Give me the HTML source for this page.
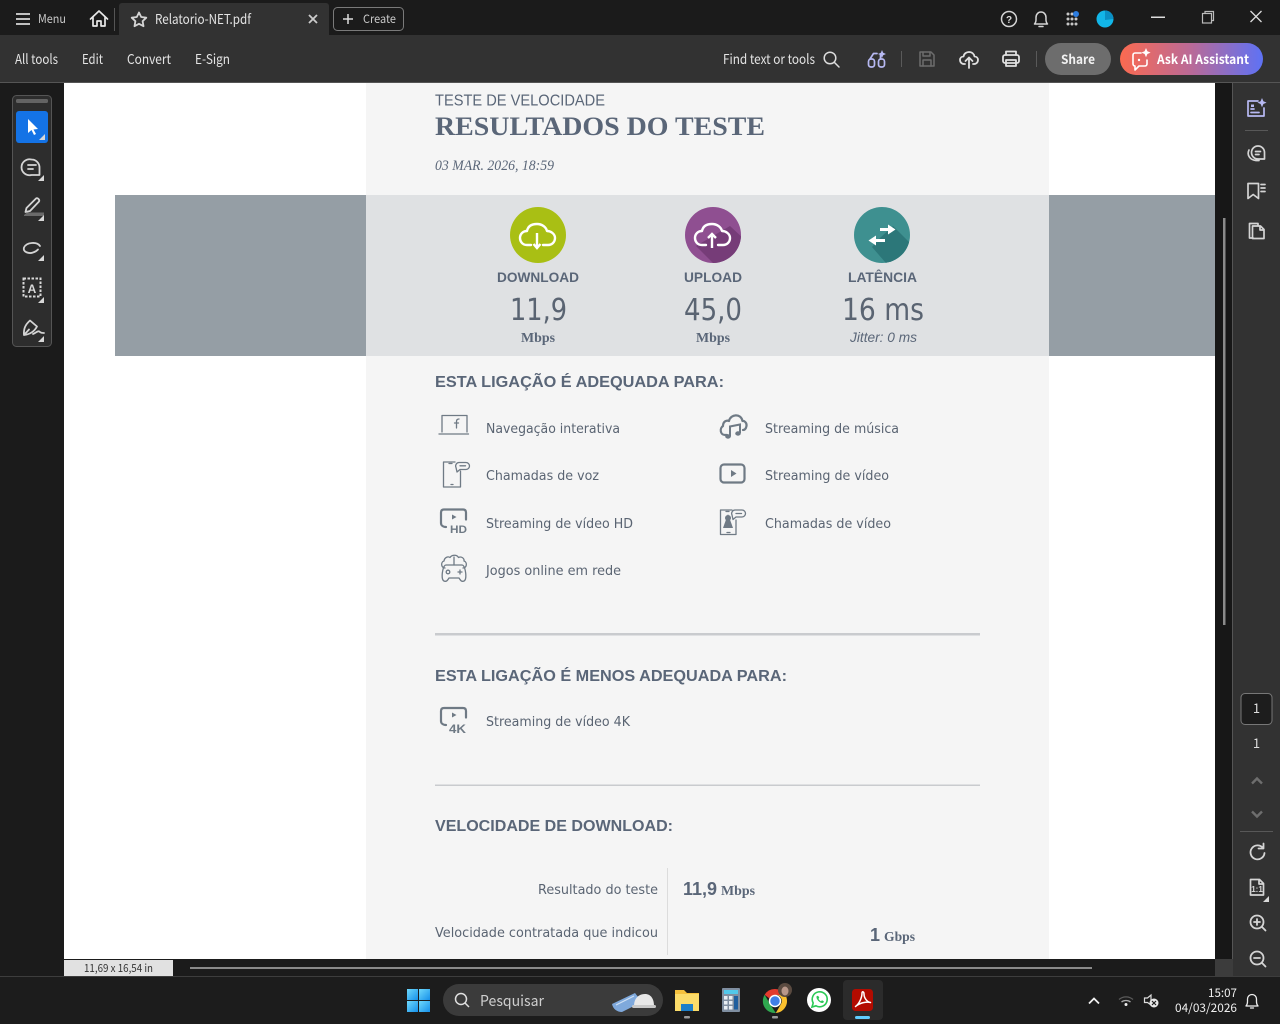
<!DOCTYPE html>
<html lang="pt"><head><meta charset="utf-8"><title>Relatorio-NET.pdf</title>
<style>
html,body{margin:0;padding:0;background:#1b1b1b;overflow:hidden}
svg{display:block}
.ui{font-family:"Noto Sans CJK JP","Liberation Sans",sans-serif;fill:#e4e4e4}
.os{font-family:"DejaVu Sans","Liberation Sans",sans-serif;fill:#5a6472;font-size:13.5px}
.ar{font-family:"Liberation Sans",sans-serif;fill:#5a6678}
.se{font-family:"Liberation Serif",serif;fill:#5a6678}
.b{font-weight:bold}
.ic{fill:none;stroke:#d4d4d4;stroke-width:1.5;stroke-linecap:round;stroke-linejoin:round}
.dc{fill:none;stroke:#6f7a85;stroke-width:1.300;stroke-linecap:round;stroke-linejoin:round}
.dt{fill:none;stroke:#6f7a85;stroke-width:2.200;stroke-linecap:round;stroke-linejoin:round}
</style></head><body>
<svg width="1280" height="1024" viewBox="0 0 1280 1024" xmlns="http://www.w3.org/2000/svg">
<defs>
<linearGradient id="ai" x1="0" x2="1" y1="0" y2="0"><stop offset="0" stop-color="#fb6a50"/><stop offset=".5" stop-color="#b96a98"/><stop offset="1" stop-color="#5e72f5"/></linearGradient>
<linearGradient id="win" x1="0" x2="1" y1="0" y2="1"><stop offset="0" stop-color="#6fd8fb"/><stop offset="1" stop-color="#1590ea"/></linearGradient>
<clipPath id="c1"><circle cx="713" cy="235" r="28"/></clipPath>
<clipPath id="c2"><circle cx="882" cy="235" r="28"/></clipPath>
<path id="cloud" d="M531 245H527C522 245 520 241 520 238C520 234 523 231 527 231C528 226 532 224 537 224C542 224 546 227 547 231C551 231 555 234 555 238C555 242 552 245 548 245H543" fill="none" stroke="#fff" stroke-width="2.400" stroke-linecap="round" stroke-linejoin="round"/>
<path id="tri" d="M6 0V6H0Z" fill="#d8d8d8"/>
</defs>

<!-- base -->
<rect width="1280" height="1024" fill="#1b1b1b"/>
<rect x="0" y="35" width="1280" height="47" fill="#323232"/>
<rect x="0" y="82" width="1280" height="1" fill="#555"/>
<path d="M119 35V6a3 3 0 0 1 3-3H326a3 3 0 0 1 3 3V35Z" fill="#323232"/>
<rect x="114" y="8" width="1" height="23" fill="#555"/>

<!-- top-left -->
<path d="M16 14H30M16 19H30M16 24H30" stroke="#d8d8d8" stroke-width="1.700" fill="none"/>
<text class="ui" x="38" y="23" font-size="12" textLength="28" lengthAdjust="spacingAndGlyphs" style="fill:#c8c8c8">Menu</text>
<path class="ic" style="stroke:#e8e8e8;stroke-width:1.700" d="M90.500 19L99 11L107.500 19M93 17.500V26H97V21H101V26H105V17.500"/>
<path class="ic" style="stroke-width:1.800" d="M139 12.500L141.200 17L146.300 17.700L142.600 21.200L143.500 26.200L139 23.800L134.500 26.200L135.400 21.200L131.700 17.700L136.800 17Z"/>
<text class="ui" x="155" y="24" font-size="13.500" textLength="96" lengthAdjust="spacingAndGlyphs">Relatorio-NET.pdf</text>
<path d="M309 15L317 23M317 15L309 23" stroke="#ccc" stroke-width="1.800"/>
<rect x="333.500" y="7.500" width="70" height="23" rx="4" fill="none" stroke="#7a7a7a"/>
<path d="M348 14V24M343 19H353" stroke="#ddd" stroke-width="1.500"/>
<text class="ui" x="363" y="23" font-size="11.500" textLength="33" lengthAdjust="spacingAndGlyphs" style="fill:#c8c8c8">Create</text>

<!-- top-right -->
<circle cx="1009" cy="19" r="7.500" class="ic"/>
<text x="1009" y="23" text-anchor="middle" font-family="Liberation Sans,sans-serif" font-size="10" font-weight="bold" fill="#ddd">?</text>
<path class="ic" d="M1034.500 24C1036.500 22 1036 20 1036 17.500C1036 14 1038.500 12 1041 12C1043.500 12 1046 14 1046 17.500C1046 20 1045.500 22 1047.500 24ZM1039 26.500H1043"/>
<g fill="#c8c8c8"><circle cx="1068" cy="14" r="1.500"/><circle cx="1072" cy="14" r="1.500"/><circle cx="1068" cy="19" r="1.500"/><circle cx="1072" cy="19" r="1.500"/><circle cx="1076" cy="19" r="1.500"/><circle cx="1068" cy="24" r="1.500"/><circle cx="1072" cy="24" r="1.500"/><circle cx="1076" cy="24" r="1.500"/></g>
<circle cx="1076" cy="14" r="3" fill="#2d7de0"/>
<circle cx="1105" cy="19" r="8.500" fill="#12b6e8"/>
<path d="M1105 10.500A8.500 8.500 0 0 1 1113.500 19L1105 20Z" fill="#0a8fc4"/>
<rect x="1151" y="16.500" width="14" height="1.500" fill="#ddd"/>
<rect x="1202.500" y="13.500" width="9" height="9.500" fill="none" stroke="#bbb" stroke-width="1.200"/>
<path d="M1205 13.500V11.500H1213.500V20.500H1211.500" fill="none" stroke="#bbb" stroke-width="1.200"/>
<path d="M1250.500 11L1261.500 22M1261.500 11L1250.500 22" stroke="#ddd" stroke-width="1.300"/>

<!-- toolbar -->
<g class="ui" font-size="13.500">
<text x="15" y="64" textLength="43" lengthAdjust="spacingAndGlyphs">All tools</text>
<text x="82" y="64" textLength="21" lengthAdjust="spacingAndGlyphs">Edit</text>
<text x="127" y="64" textLength="44" lengthAdjust="spacingAndGlyphs">Convert</text>
<text x="195" y="64" textLength="35" lengthAdjust="spacingAndGlyphs">E-Sign</text>
<text x="723" y="64" textLength="92" lengthAdjust="spacingAndGlyphs">Find text or tools</text>
</g>
<circle cx="830" cy="58" r="5.800" class="ic" style="stroke:#ddd"/><path d="M834.500 62.500L839 67" class="ic" style="stroke:#ddd"/>
<g class="ic" style="stroke:#b7b9f2;stroke-width:1.700"><rect x="868.500" y="59" width="6" height="8" rx="2.500"/><rect x="878.500" y="59" width="6" height="8" rx="2.500"/><path d="M870 59L873.500 53.500H877M880.500 59V55"/></g>
<path d="M882 50l1.200 2.800 2.800 1.200-2.800 1.200-1.200 2.800-1.200-2.800-2.800-1.200 2.800-1.200z" fill="#b7b9f2"/>
<rect x="901" y="51" width="1" height="16" fill="#5a5a5a"/>
<g class="ic" style="stroke:#6d6d6d"><path d="M920 52H931L934 55V66H920Z"/><path d="M923 52V56H930V52M923 66V60H931V66"/></g>
<g class="ic" style="stroke:#e0e0e0;stroke-width:1.800"><path d="M965 64H964C961.500 64 960 62 960 60C960 58 961.500 56.500 963.500 56.500C964 53.500 966.500 52 969 52C972 52 974 54 974.500 56.500C976.500 56.500 978 58 978 60C978 62 976.500 64 974 64H973"/><path d="M969 68V58M965.500 61L969 57.500L972.500 61"/></g>
<g class="ic" style="stroke:#e0e0e0;stroke-width:1.800"><path d="M1006 55V51.500H1016V55"/><rect x="1003" y="55" width="16" height="8" rx="2"/><rect x="1006" y="60" width="10" height="6"/></g>
<rect x="1036" y="51" width="1" height="16" fill="#5a5a5a"/>
<rect x="1045" y="43" width="66" height="32" rx="16" fill="#6d6d6d"/>
<text class="ui b" x="1061" y="64" font-size="13" textLength="34" lengthAdjust="spacingAndGlyphs" style="fill:#f2f2f2">Share</text>
<rect x="1120" y="43" width="143" height="32" rx="16" fill="url(#ai)"/>
<path class="ic" style="stroke:#fff;stroke-width:1.600" d="M1141 53H1135a2 2 0 0 0-2 2V64a2 2 0 0 0 2 2V70L1139 66H1145a2 2 0 0 0 2-2V60"/>
<path d="M1146 48l1.400 3.200 3.200 1.400-3.200 1.400-1.400 3.200-1.400-3.200-3.200-1.400 3.200-1.400z" fill="#fff"/>
<circle cx="1139" cy="60" r="1.200" fill="#fff"/>
<text class="ui b" x="1157" y="64" font-size="13" textLength="92" lengthAdjust="spacingAndGlyphs" style="fill:#fff">Ask AI Assistant</text>

<!-- page -->
<rect x="64" y="83" width="1151" height="876" fill="#fff"/>
<rect x="366" y="83" width="683" height="876" fill="#f5f5f5"/>
<rect x="115" y="195" width="1100" height="161" fill="#959ea5"/>
<rect x="366" y="195" width="683" height="161" fill="#dfe1e3"/>

<text class="ar" x="435" y="105.500" font-size="16" textLength="170" lengthAdjust="spacingAndGlyphs">TESTE DE VELOCIDADE</text>
<text class="se b" x="435" y="135" font-size="26" textLength="330" lengthAdjust="spacingAndGlyphs">RESULTADOS DO TESTE</text>
<text class="se" x="435" y="170" font-size="14.500" font-style="italic" textLength="119" lengthAdjust="spacingAndGlyphs">03 MAR. 2026, 18:59</text>

<!-- metric circles -->
<circle cx="538" cy="235" r="28" fill="#a9bf14"/>
<use href="#cloud"/>
<path d="M537 233V248M533.500 244L537 248L540.500 244" fill="none" stroke="#fff" stroke-width="2.400"/>
<circle cx="713" cy="235" r="28" fill="#8f4f91"/>
<path clip-path="url(#c1)" d="M696 246L730 226L745 240V270H720Z" fill="#763c78"/>
<use href="#cloud" x="175"/>
<path d="M712 248V234M708 238L712 234L716 238" fill="none" stroke="#fff" stroke-width="2.400"/>
<circle cx="882" cy="235" r="28" fill="#3e9090"/>
<path clip-path="url(#c2)" d="M872 247L880 238L893 226L915 248V270H892Z" fill="#2c7779"/>
<path d="M880 229.500H891M873 240.500H885" fill="none" stroke="#fff" stroke-width="3"/>
<path d="M888 224.500L895.500 229.500L888 234.500ZM876 235.500L868.500 240.500L876 245.500Z" fill="#fff"/>

<g class="ar b" font-size="14">
<text x="497" y="282" textLength="82" lengthAdjust="spacingAndGlyphs">DOWNLOAD</text>
<text x="684" y="282" textLength="58" lengthAdjust="spacingAndGlyphs">UPLOAD</text>
<text x="848" y="282" textLength="69" lengthAdjust="spacingAndGlyphs">LATÊNCIA</text>
</g>
<g class="os" style="font-size:30px">
<text x="510" y="320" textLength="57" lengthAdjust="spacingAndGlyphs">11,9</text>
<text x="684" y="320" textLength="58" lengthAdjust="spacingAndGlyphs">45,0</text>
<text x="842" y="320" textLength="82" lengthAdjust="spacingAndGlyphs">16 ms</text>
</g>
<g class="se b" font-size="14">
<text x="521" y="342" textLength="34" lengthAdjust="spacingAndGlyphs">Mbps</text>
<text x="696" y="342" textLength="34" lengthAdjust="spacingAndGlyphs">Mbps</text>
</g>
<text class="ar" x="850" y="342" font-size="14" font-style="italic" textLength="67" lengthAdjust="spacingAndGlyphs">Jitter: 0 ms</text>

<!-- headings -->
<g class="ar b" font-size="16">
<text x="435" y="387" textLength="289" lengthAdjust="spacingAndGlyphs">ESTA LIGAÇÃO É ADEQUADA PARA:</text>
<text x="435" y="681" textLength="352" lengthAdjust="spacingAndGlyphs">ESTA LIGAÇÃO É MENOS ADEQUADA PARA:</text>
<text x="435" y="831" textLength="238" lengthAdjust="spacingAndGlyphs">VELOCIDADE DE DOWNLOAD:</text>
</g>

<!-- items -->
<g class="os">
<text x="486" y="433" textLength="134" lengthAdjust="spacingAndGlyphs">Navegação interativa</text>
<text x="486" y="480" textLength="113" lengthAdjust="spacingAndGlyphs">Chamadas de voz</text>
<text x="486" y="528" textLength="147" lengthAdjust="spacingAndGlyphs">Streaming de vídeo HD</text>
<text x="486" y="575" textLength="135" lengthAdjust="spacingAndGlyphs">Jogos online em rede</text>
<text x="765" y="433" textLength="134" lengthAdjust="spacingAndGlyphs">Streaming de música</text>
<text x="765" y="480" textLength="124" lengthAdjust="spacingAndGlyphs">Streaming de vídeo</text>
<text x="765" y="528" textLength="126" lengthAdjust="spacingAndGlyphs">Chamadas de vídeo</text>
<text x="486" y="726" textLength="144" lengthAdjust="spacingAndGlyphs">Streaming de vídeo 4K</text>
<text x="538" y="894" textLength="120" lengthAdjust="spacingAndGlyphs">Resultado do teste</text>
<text x="435" y="937" textLength="223" lengthAdjust="spacingAndGlyphs">Velocidade contratada que indicou</text>
</g>

<!-- item icons -->
<path class="dc" d="M442 432V415.500H467V432M439 434H468.500M456.500 428V421.500C456.500 419.500 457.500 419 459 419M454.500 423H458.500"/>
<path class="dc" d="M455 462H443.500V487H460.500V471M449 463.500H452M451 484.500H453"/>
<path class="dc" d="M456 467.500a3.500 3.500 0 0 1 3-5h7a3.500 3.500 0 0 1 0 7h-6l-3 2.500z"/><path class="dc" d="M460 465.800H465.500"/>
<path class="dt" d="M446 527C442.500 527 441 525 441 523V512.500C441 510.500 442 509.500 444 509.500H463C465 509.500 466 510.500 466 512.500V519.500"/>
<path d="M452 514.500L456.500 517L452 519.500Z" fill="#6f7a85"/>
<text x="450" y="533" font-family="Liberation Sans,sans-serif" font-weight="bold" font-size="11" fill="#6f7a85" textLength="17" lengthAdjust="spacingAndGlyphs">HD</text>
<path class="dc" d="M445 568C441 568 440.500 562 444 561C444.500 557.500 448 556 450 557.500C452 554.500 457 554.500 458.500 557.500C461.500 556 464.500 558.500 464 561C467.500 562 467 568 463 568M454 557V565"/>
<path class="dc" d="M446 565H462C465 565 466.500 575 465.500 579C464.500 582 461.500 582 460 579.500L459 578H449L448 579.500C446.500 582 443.500 582 442.500 579C441.500 575 443 565 446 565Z"/>
<circle class="dc" cx="448" cy="572" r="1.800"/><path class="dc" d="M458 572H462M460 570V574"/>

<path class="dt" d="M727 435H725C720 435 719.500 428 723 426C723 421 727 420 729 421C730.500 414 741 413 742.500 421C744 420.500 747 422.500 746.500 426C746 428.500 745 430 743 430"/>
<path d="M730 436.500V426.500L740 424.500V433" fill="none" stroke="#6f7a85" stroke-width="2"/>
<ellipse cx="728" cy="436.500" rx="2.800" ry="2.200" fill="#6f7a85"/><ellipse cx="738" cy="433.500" rx="2.800" ry="2.200" fill="#6f7a85"/>
<rect x="720.500" y="464.500" width="24" height="18" rx="3.500" class="dt"/>
<path d="M731 470L736.500 473.500L731 477Z" fill="#6f7a85"/>
<path class="dc" d="M732 510H720.500V534.500H736V520M726 511.500H729M727 532.500H730"/>
<path d="M728 514L733 528H723Z" fill="#6f7a85"/><circle cx="728" cy="518" r="3" fill="#6f7a85"/>
<path class="dc" d="M732 515a3.500 3.500 0 0 1 3-5h7a3.500 3.500 0 0 1 0 7h-6l-3 2.500z"/><path class="dc" d="M736 513.500H741.500"/>

<path class="dt" d="M446 725C442.500 725 441 723 441 721V711C441 709 442 708 444 708H463C465 708 466 709 466 711V717.500"/>
<path d="M452 712.500L456.500 715L452 717.500Z" fill="#6f7a85"/>
<text x="449" y="733" font-family="Liberation Sans,sans-serif" font-weight="bold" font-size="11.500" fill="#6f7a85" textLength="17" lengthAdjust="spacingAndGlyphs">4K</text>

<rect x="435" y="633" width="545" height="2.500" fill="#c9cbce"/>
<rect x="435" y="784.500" width="545" height="1.500" fill="#c9cbce"/>
<rect x="667" y="868" width="1" height="87" fill="#dcdcdc"/>

<text class="ar b" x="683" y="895" font-size="18" textLength="34" lengthAdjust="spacingAndGlyphs">11,9</text>
<text class="se b" x="721" y="895" font-size="14" textLength="34" lengthAdjust="spacingAndGlyphs">Mbps</text>
<text class="ar b" x="870" y="941" font-size="18">1</text>
<text class="se b" x="884" y="941" font-size="14" textLength="31" lengthAdjust="spacingAndGlyphs">Gbps</text>

<!-- left rail -->
<rect x="12.500" y="95.500" width="39" height="251" rx="4" fill="#2d2d2d" stroke="#555"/>
<rect x="16" y="99" width="32" height="4" rx="1.500" fill="#636363"/>
<rect x="16" y="111" width="32" height="32" rx="3" fill="#1473e6"/>
<path d="M28 119V133L31.500 130L34 135L36 134L33.500 129.500L38 129Z" fill="#fff"/>
<use href="#tri" x="39" y="134" style="fill:#fff"/>
<path d="M48 0" />
<path class="ic" style="stroke-width:1.800" d="M31.500 159.500a8 8 0 1 0 0 15.500H39.500V167.500a8 8 0 0 0-8-8Z"/><path class="ic" style="stroke-width:1.800" d="M28 165H36M28 169H33"/>
<use href="#tri" x="38" y="175"/>
<path class="ic" style="stroke-width:1.800" d="M26.500 208L36 198.500C37.500 197.500 40 199.500 39 201.500L30 211L25.500 212Z"/><path d="M24 215L27 212.500H44V216H24Z" fill="#6a6a6a"/>
<use href="#tri" x="38" y="215"/>
<path class="ic" style="stroke-width:1.800" d="M40 246C37 241.500 26.500 242 24 247.500C22.500 252 29 254 33 252.500C35 252 37 250.500 38 249.500"/>
<use href="#tri" x="38" y="255"/>
<rect x="23.500" y="278.500" width="17" height="18" fill="none" stroke="#d8d8d8" stroke-width="2" stroke-dasharray="2.500 1.500"/>
<text x="32" y="293" text-anchor="middle" font-family="Liberation Sans,sans-serif" font-weight="bold" font-size="12" fill="#d8d8d8">A</text>
<use href="#tri" x="38" y="297"/>
<path class="ic" style="stroke-width:1.800" d="M24 335C23.500 329 25 325 30 320.500L37 326.500C34 332 29 334.500 24 335ZM24 335L29 329.500M33 334C36 333 38 330 40 332C41 333 42 333 44 333"/>
<use href="#tri" x="38" y="336"/>

<!-- right scroll + panel -->
<rect x="1215" y="83" width="18" height="876" fill="#171717"/>
<rect x="1223" y="218" width="2.500" height="407" fill="#8a8a8a"/>
<rect x="1233" y="83" width="47" height="893" fill="#323232"/>
<rect x="1232" y="83" width="1" height="893" fill="#555"/>
<rect x="1215" y="959" width="18" height="17" fill="#3c3c3c"/>

<g class="ic" style="stroke:#b7b9f2;stroke-width:1.700"><path d="M1258 101H1248V116H1264V108"/><path d="M1251 109H1254M1251 112.500H1259"/></g>
<rect x="1251" y="104.500" width="3" height="2.500" fill="#b7b9f2"/>
<path d="M1262 98l1.400 3.200 3.200 1.400-3.200 1.400-1.400 3.200-1.400-3.200-3.200-1.400 3.200-1.400z" fill="#b7b9f2"/>
<rect x="1245" y="130" width="23" height="1" fill="#585858"/>
<path class="ic" style="stroke-width:1.700" d="M1258 146a6.500 6.500 0 1 0 0 13H1264.500V152.500a6.500 6.500 0 0 0-6.500-6.500ZM1255.500 151.500H1260.500M1255.500 154.500H1259M1249 150C1246.500 155 1250 160 1256 160.500H1259"/>
<path class="ic" style="stroke-width:1.700" d="M1248 183.500H1258.500V198.500L1253.200 194.500L1248 198.500ZM1261 184.500H1265M1261 188H1265M1261 191.500H1265"/>
<path class="ic" style="stroke-width:1.700" d="M1253 238H1249.500V223.500H1258V225.500"/><path class="ic" style="stroke-width:1.700" d="M1252.500 226H1260.500L1264 229.500V238.500H1252.500ZM1260 226V230H1264"/>

<rect x="1241" y="693.500" width="31" height="31" rx="4" fill="#1d1d1d" stroke="#777"/>
<text class="ui" x="1256.500" y="713" font-size="13" text-anchor="middle" style="fill:#ddd">1</text>
<text class="ui" x="1256.500" y="748" font-size="13" text-anchor="middle" style="fill:#ddd">1</text>
<path d="M1252 783.500L1257 778.500L1262 783.500M1252 811.500L1257 816.500L1262 811.500" fill="none" stroke="#6e6e6e" stroke-width="2.400"/>
<rect x="1240" y="831" width="33" height="1" fill="#585858"/>
<path class="ic" style="stroke-width:1.800" d="M1263 848A7 7 0 1 0 1264.500 853M1263.500 843.500V848.500H1258.500"/>
<path class="ic" style="stroke-width:1.700" d="M1250.500 879.500H1259.500L1263.500 883.500V895H1250.500ZM1259 879.500V884H1263.500"/>
<text x="1257" y="892" text-anchor="middle" font-family="Liberation Sans,sans-serif" font-weight="bold" font-size="8" fill="#d8d8d8">1:1</text>
<use href="#tri" x="1263" y="896"/>
<circle cx="1257" cy="922" r="6.500" class="ic" style="stroke-width:1.800"/><path class="ic" style="stroke-width:1.800" d="M1261.800 926.800L1265.500 930.500M1254 922H1260M1257 919V925"/>
<circle cx="1257" cy="958" r="6.500" class="ic" style="stroke-width:1.800"/><path class="ic" style="stroke-width:1.800" d="M1261.800 962.800L1265.500 966.500M1254 958H1260"/>

<!-- status -->
<rect x="64" y="960" width="109" height="16" fill="#e1e1e1"/>
<text class="ui" x="84" y="972" font-size="11" textLength="69" lengthAdjust="spacingAndGlyphs" style="fill:#333">11,69 x 16,54 in</text>
<rect x="190" y="967" width="902" height="2" fill="#8a8a8a"/>

<!-- taskbar -->
<rect x="0" y="976" width="1280" height="48" fill="#1c1c1c"/>
<rect x="0" y="976" width="1280" height="1" fill="#3d3d3d"/>
<g fill="url(#win)"><rect x="407" y="989" width="11" height="11"/><rect x="419" y="989" width="11" height="11"/><rect x="407" y="1001" width="11" height="11"/><rect x="419" y="1001" width="11" height="11"/></g>
<rect x="443" y="984" width="220" height="32" rx="16" fill="#3b3b3b"/>
<circle cx="461" cy="999" r="5.500" fill="none" stroke="#e0e0e0" stroke-width="1.500"/><path d="M465 1003L469 1007" stroke="#e0e0e0" stroke-width="1.500"/>
<text class="ui" x="480" y="1006" font-size="15" textLength="64" lengthAdjust="spacingAndGlyphs" style="fill:#cfcfcf">Pesquisar</text>
<path d="M612 1004L635 993L642 1002L622 1012C617 1012 613 1009 612 1004Z" fill="#7fa9dc"/>
<path d="M616 1005L634 996" stroke="#cfe0f4" stroke-width="1.200"/>
<path d="M634 1006C634 998 639 994 645 994C651 994 654 999 654 1006Z" fill="#e8e8e8"/><rect x="632" y="1005" width="24" height="3" rx="1.500" fill="#c9c9c9"/>

<path d="M675 990H684L687 993H699V1011H675Z" fill="#f5c13d"/><rect x="675" y="994" width="24" height="17" fill="#fbdc6a"/><rect x="681" y="1004" width="12" height="7" fill="#1d7fc9"/>
<rect x="684" y="1016" width="6" height="2.500" rx="1" fill="#9a9a9a"/>
<rect x="722" y="988" width="18" height="24" rx="1" fill="#7f8ea0"/><rect x="724" y="990" width="14" height="4" fill="#52c8ea"/>
<g fill="#e8eef3"><rect x="724" y="996" width="3.500" height="3.500"/><rect x="729" y="996" width="3.500" height="3.500"/><rect x="724" y="1001" width="3.500" height="3.500"/><rect x="729" y="1001" width="3.500" height="3.500"/><rect x="724" y="1006" width="3.500" height="3.500"/><rect x="729" y="1006" width="3.500" height="3.500"/></g>
<rect x="734" y="996" width="4" height="13.500" fill="#1e5e9e"/>

<path d="M775 989A12 12 0 0 1 785.400 995H775A6 6 0 0 0 769.500 998.500L764.600 994.800A12 12 0 0 1 775 989Z" fill="#e33b2e"/>
<path d="M764.600 994.800L769.800 1003.800L775.800 1013A12 12 0 0 1 764.600 994.800Z" fill="#2fa84f"/>
<path d="M785.400 995A12 12 0 0 1 775.800 1013L781 1004A6 6 0 0 0 775 995Z" fill="#fbc02d"/>
<circle cx="775" cy="1001" r="5.500" fill="#3f7fe8" stroke="#fff" stroke-width="1.500"/>
<circle cx="785" cy="990" r="7" fill="#5a4a40"/><ellipse cx="785" cy="991" rx="3.500" ry="4.500" fill="#b8978a"/>
<rect x="772" y="1016" width="6" height="2.500" rx="1" fill="#9a9a9a"/>

<circle cx="819" cy="1000" r="12" fill="#fff"/>
<path d="M812 1007L813.200 1003A7.500 7.500 0 1 1 816 1005.800Z" fill="none" stroke="#2bc956" stroke-width="1.600"/>
<path d="M816.500 996.500C816 999 819.500 1003 822.500 1003C823.500 1003 824 1002 823.800 1001.300L822 1000.300L821 1001.200C820 1001 818.800 999.800 818.500 998.800L819.300 997.800L818.300 996C817.500 995.700 816.800 996 816.500 996.500Z" fill="#2bc956"/>

<rect x="843" y="980" width="40" height="40" rx="4" fill="#2b2b2b"/>
<rect x="852" y="989" width="21" height="22" rx="3.500" fill="#b30b00"/>
<path d="M855.500 1006.500C859 1004 862 998 862 993C862 991 864 991.500 864 994C864 998 867 1002 870.500 1002.500C867 1001.500 860 1002.500 855.500 1006.500Z" fill="none" stroke="#fff" stroke-width="1.500" stroke-linejoin="round"/>
<rect x="855" y="1016" width="15" height="3" rx="1.500" fill="#60cdff"/>

<path d="M1089 1003.500L1094 998.500L1099 1003.500" fill="none" stroke="#f0f0f0" stroke-width="1.800"/>
<path d="M1119 999.500C1123 996 1129 996 1133 999.500" fill="none" stroke="#5a5a5a" stroke-width="1.300"/>
<path d="M1121.500 1002C1124 1000 1128 1000 1130.500 1002" fill="none" stroke="#aaa" stroke-width="1.300"/>
<circle cx="1126" cy="1004.500" r="1.500" fill="#eee"/>
<path d="M1144.500 998H1147.500L1151 995V1005L1147.500 1002.500H1144.500Z" fill="none" stroke="#ddd" stroke-width="1.200"/>
<circle cx="1154" cy="1003" r="4.500" fill="#e8e8e8"/><path d="M1152 1001L1156 1005M1156 1001L1152 1005" stroke="#1c1c1c" stroke-width="1.200"/>
<text class="ui" x="1208" y="997" font-size="12" textLength="29" lengthAdjust="spacingAndGlyphs" style="fill:#f0f0f0">15:07</text>
<text class="ui" x="1175" y="1012" font-size="12" textLength="62" lengthAdjust="spacingAndGlyphs" style="fill:#f0f0f0">04/03/2026</text>
<path class="ic" style="stroke:#eee;stroke-width:1.300" d="M1246 1006C1248 1004 1247.500 1001.500 1247.500 999C1247.500 996.500 1249.500 994.500 1252 994.500C1254.500 994.500 1256.500 996.500 1256.500 999C1256.500 1001.500 1256 1004 1258 1006ZM1250.500 1008H1253.500"/>
</svg>
</body></html>
